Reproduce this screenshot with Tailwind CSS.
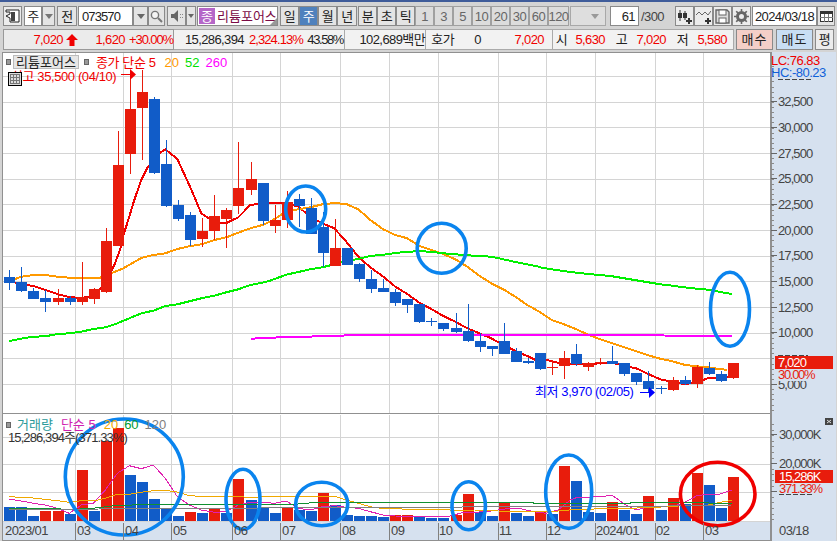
<!DOCTYPE html>
<html lang="ko">

<head>
    <meta charset="UTF-8">
    <title>073570 주봉 차트</title>
    <script src="https://cdn.jsdelivr.net/npm/@tailwindcss/browser@4"></script>
</head>

<body class="w-[837px] h-[541px] overflow-hidden bg-[#d4d4d4] flex flex-col text-[13px] leading-none text-[#222] font-['Liberation_Sans','Noto_Sans_CJK_KR',sans-serif]">
    <div class="h-[2px] shrink-0 bg-[#3f5c9a]"></div>

    <!-- toolbar -->
    <div class="flex h-[20px] mt-[4px] ml-[3px] shrink-0 tracking-[-0.6px]">
        <div class="w-[19px] border border-[#8a8a8a] bg-[#ececec] flex items-center justify-center">
            <svg width="15" height="14" viewBox="0 0 15 14"><path d="M1 1h13v12H5V9L1 7l4-2V3H1z" fill="#fff" stroke="#222"/><rect x="6" y="3" width="4" height="9" fill="#444"/></svg>
        </div>
        <div class="w-[18px] ml-[2px] border border-[#8a8a8a] bg-white flex items-center justify-center">주</div>
        <div class="w-[13px] border border-[#8a8a8a] bg-[#e4e4e4] flex items-center justify-center"><div class="border-x-[4px] border-t-[5px] border-x-transparent border-t-[#777]"></div></div>
        <div class="w-[20px] ml-[2px] border border-[#8a8a8a] bg-[#e4e4e4] flex items-center justify-center">전</div>
        <div class="w-[55px] ml-[1px] border border-[#8a8a8a] bg-white flex items-center pl-[3px] tracking-[-0.9px]">073570</div>
        <div class="w-[15px] border border-[#8a8a8a] bg-[#e4e4e4] flex items-center justify-center"><div class="border-x-[4px] border-t-[5px] border-x-transparent border-t-[#666]"></div></div>
        <div class="w-[17px] border border-[#8a8a8a] bg-[#e4e4e4] flex items-center justify-center">
            <svg width="13" height="13" viewBox="0 0 13 13"><circle cx="5" cy="5" r="3.6" fill="#f4f4f4" stroke="#777" stroke-width="1.4"/><path d="M8 8l4 4" stroke="#777" stroke-width="2"/></svg>
        </div>
        <div class="w-[19px] ml-[2px] border border-[#8a8a8a] bg-[#e4e4e4] flex items-center justify-center">
            <svg width="14" height="14" viewBox="0 0 14 14"><path d="M1 5h3l4-4v12l-4-4H1z" fill="#666"/><path d="M10 5h1v1h-1zM12 5h1v1h-1zM10 8h1v1h-1zM12 8h1v1h-1z" fill="#888"/></svg>
        </div>
        <div class="w-[10px] border border-[#8a8a8a] bg-[#e4e4e4] flex items-center justify-center"><div class="border-x-[3px] border-t-[4px] border-x-transparent border-t-[#666]"></div></div>
        <div class="w-[81px] ml-[1px] border border-[#8a8a8a] bg-white flex items-center relative tracking-normal">
            <div class="w-[16px] h-[16px] ml-[1px] bg-[#b566c8] text-white flex items-center justify-center">종</div>
            <div class="ml-[2px] text-[#7a0a45]">리튬포어스</div>
            <div class="absolute right-0 bottom-0 border-l-[7px] border-b-[7px] border-l-transparent border-b-[#999]"></div>
        </div>
        <div class="w-[19px] ml-[2px] border border-[#8a8a8a] bg-[#e4e4e4] flex items-center justify-center">일</div>
        <div class="w-[19px] border border-[#8a8a8a] bg-[#4f81bd] text-white flex items-center justify-center">주</div>
        <div class="w-[19px] border border-[#8a8a8a] bg-[#e4e4e4] flex items-center justify-center">월</div>
        <div class="w-[20px] border border-[#8a8a8a] bg-[#e4e4e4] flex items-center justify-center">년</div>
        <div class="w-[19px] ml-[1px] border border-[#8a8a8a] bg-[#e4e4e4] flex items-center justify-center">분</div>
        <div class="w-[19px] border border-[#8a8a8a] bg-[#e4e4e4] flex items-center justify-center">초</div>
        <div class="w-[19px] border border-[#8a8a8a] bg-[#e4e4e4] flex items-center justify-center">틱</div>
        <div class="w-[19px] border border-[#a0a0a0] bg-[#dcdcdc] text-[#666] flex items-center justify-center">1</div>
        <div class="w-[19px] border border-[#a0a0a0] bg-[#dcdcdc] text-[#666] flex items-center justify-center">3</div>
        <div class="w-[19px] border border-[#a0a0a0] bg-[#dcdcdc] text-[#666] flex items-center justify-center">5</div>
        <div class="w-[19px] border border-[#a0a0a0] bg-[#dcdcdc] text-[#666] flex items-center justify-center">10</div>
        <div class="w-[19px] border border-[#a0a0a0] bg-[#dcdcdc] text-[#666] flex items-center justify-center">20</div>
        <div class="w-[19px] border border-[#a0a0a0] bg-[#dcdcdc] text-[#666] flex items-center justify-center">30</div>
        <div class="w-[19px] border border-[#a0a0a0] bg-[#dcdcdc] text-[#666] flex items-center justify-center">60</div>
        <div class="w-[21px] border border-[#a0a0a0] bg-[#dcdcdc] text-[#666] flex items-center justify-center">120</div>
        <div class="w-[36px] ml-[1px] border border-[#a8a8a8] bg-[#dedede] flex items-center justify-end pr-[6px]"><div class="border-x-[4px] border-t-[5px] border-x-transparent border-t-[#999]"></div></div>
        <div class="w-[29px] ml-[4px] border border-[#8a8a8a] bg-white flex items-center justify-end pr-[3px]">61</div>
        <div class="w-[36px] pl-[2px] flex items-center text-[#444]">/300</div>
        <div class="w-[19px] border border-[#8a8a8a] bg-[#ececec] flex items-center justify-center">
            <svg width="15" height="15" viewBox="0 0 15 15"><path d="M3 1v11M8 2v9" stroke="#333"/><rect x="1" y="4" width="4" height="5" fill="#333"/><rect x="6" y="4" width="4" height="5" fill="#333"/><path d="M11 9h2v2h2v2h-2v2h-2v-2H9v-2h2z" fill="#333"/></svg>
        </div>
        <div class="w-[19px] border border-[#8a8a8a] bg-[#ececec] flex items-center justify-center">
            <svg width="15" height="15" viewBox="0 0 15 15"><path d="M0 6l3-3 3 3 3-3 3 3 3-4" fill="none" stroke="#666"/><path d="M11 9h2v2h2v2h-2v2h-2v-2H9v-2h2z" fill="#333"/></svg>
        </div>
        <div class="w-[19px] border border-[#8a8a8a] bg-[#ececec] flex items-center justify-center">
            <svg width="15" height="15" viewBox="0 0 15 15"><path d="M1 1h11l2 2v11H1z" fill="#ddd" stroke="#666" stroke-width="1.4"/><rect x="4" y="1" width="7" height="5" fill="#fff" stroke="#666"/><rect x="4" y="9" width="7" height="5" fill="#fff" stroke="#666"/></svg>
        </div>
        <div class="w-[19px] border border-[#8a8a8a] bg-[#ececec] flex items-center justify-center">
            <svg width="15" height="15" viewBox="0 0 15 15"><circle cx="7.5" cy="7.5" r="4" fill="none" stroke="#666" stroke-width="3"/><path d="M7.5 0v15M0 7.5h15M2.2 2.2l10.6 10.6M12.8 2.2L2.2 12.8" stroke="#666" stroke-width="1.6" stroke-dasharray="2.4 10 2.4 0"/></svg>
        </div>
        <div class="w-[65px] ml-[1px] border border-[#8a8a8a] bg-white flex items-center justify-center">2024/03/18</div>
        <div class="w-[18px] border border-[#8a8a8a] bg-[#e4e4e4] flex items-center justify-center">
            <svg width="13" height="11" viewBox="0 0 13 11"><rect x=".5" y=".5" width="12" height="10" fill="#fff" stroke="#333"/><path d="M0 1h13v2H0z" fill="#333"/><path d="M4.5 3v8M8.5 3v8M0 6.5h13" stroke="#777"/></svg>
        </div>
    </div>

    <!-- quote strip -->
    <div class="flex h-[21px] mt-[3px] ml-[3px] shrink-0 tracking-[-0.6px]">
        <div class="w-[171px] border border-[#999] bg-[#ebebeb] flex items-center text-[#f00000]">
            <div class="w-[59px] text-right">7,020</div>
            <svg class="ml-[3px]" width="12" height="12" viewBox="0 0 12 12"><path d="M6 0l6 6H8.500v6h-5V6H0z" fill="#f00000"/></svg>
            <div class="w-[47px] text-right">1,620</div>
            <div class="w-[48px] text-right tracking-[-1.1px]">+30.00%</div>
        </div>
        <div class="w-[171px] border border-[#aaa] border-l-0 bg-[#f2f2f2] flex items-center">
            <div class="w-[70px] text-right">15,286,394</div>
            <div class="w-[59px] text-right text-[#f00000] tracking-[-0.9px]">2,324.13%</div>
            <div class="w-[40px] text-right tracking-[-1.4px]">43.58%</div>
        </div>
        <div class="w-[81px] border border-[#aaa] border-l-0 bg-[#f2f2f2] flex items-center justify-end">102,689백만</div>
        <div class="w-[127px] border border-[#aaa] border-l-0 bg-[#f2f2f2] flex items-center">
            <div class="w-[28px] text-right">호가</div>
            <div class="w-[27px] text-right">0</div>
            <div class="w-[63px] text-right text-[#f00000]">7,020</div>
        </div>
        <div class="w-[181px] border border-[#aaa] border-l-0 bg-[#f2f2f2] flex items-center">
            <div class="w-[14px] text-right">시</div>
            <div class="w-[38px] text-right text-[#f00000]">5,630</div>
            <div class="w-[22px] text-right">고</div>
            <div class="w-[39px] text-right text-[#f00000]">7,020</div>
            <div class="w-[22px] text-right">저</div>
            <div class="w-[39px] text-right text-[#f00000]">5,580</div>
        </div>
        <div class="w-[37px] ml-[2px] border border-[#8a8a8a] bg-[#f4cfc8] flex items-center justify-center tracking-[1px]">매수</div>
        <div class="w-[37px] ml-[3px] border border-[#8a8a8a] bg-[#c8def4] flex items-center justify-center tracking-[1px]">매도</div>
        <div class="w-[19px] ml-[2px] border border-[#8a8a8a] bg-[#ececec] flex items-center justify-center">평</div>
    </div>

    <!-- chart -->
    <div class="relative mt-[2px] flex-1 flex min-h-0 pl-[2px] pr-[1px]">
        <div class="w-[768px] flex flex-col border-l border-[#909090]">
            <div class="h-[361px] bg-white border-t border-[#909090]"></div>
            <div class="h-[108px] bg-white border-t border-[#909090]"></div>
            <div class="flex-1 bg-[#d6e1ef] border-y border-[#909090]"></div>
        </div>
        <div class="flex-1 bg-[#d6e1ef] border-l-2 border-[#909090]"></div>

        <svg id="plot" class="absolute inset-0" width="837" height="489" viewBox="0 52 837 489" font-family="Liberation Sans, Noto Sans CJK KR, sans-serif" font-size="13"></svg>

        <!-- legends sit on top of the plot -->
        <div class="absolute left-[6px] top-[3px] flex items-center">
            <div class="w-[5px] h-[6px] bg-[#999] border border-[#666]"></div>
            <div class="w-[66px] h-[14px] ml-[2px] bg-[#e6e6e6] border border-[#bbb] flex items-center justify-center">리튬포어스</div>
            <div class="w-[5px] h-[6px] ml-[5px] bg-[#999] border border-[#666]"></div>
            <div class="ml-[7px] text-[#f00000] tracking-[-0.4px]">종가 단순 5</div>
            <div class="ml-[9px] text-[#ff9900]">20</div>
            <div class="ml-[6px] text-[#00e000]">52</div>
            <div class="ml-[6px] text-[#ff00ff]">260</div>
        </div>
        <div class="absolute left-[11px] top-[18px] text-[#f00000] tracking-[-0.4px]">최고 35,500 (04/10)</div>
        <div class="absolute left-[8px] top-[20px] w-[14px] h-[14px] bg-[#ddd] border border-black flex items-center justify-center">
            <svg width="10" height="10" viewBox="0 0 10 10"><path d="M0 .5h10M0 3.500h10M0 6.500h10M0 9.500h10M.5 0v10M3.500 0v10M6.500 0v10M9.500 0v10" stroke="#777"/></svg>
        </div>
        <div class="absolute left-[535px] top-[333px] text-[#0000ff] tracking-[-0.4px]">최저 3,970 (02/05)</div>
        <div class="absolute left-[6px] top-[366px] flex items-center">
            <div class="w-[5px] h-[6px] bg-[#999] border border-[#666]"></div>
            <div class="ml-[6px] text-[#2a9a9a]">거래량</div>
            <div class="ml-[8px] text-[#d020b0]">단순 5</div>
            <div class="ml-[8px] text-[#f0a800]">20</div>
            <div class="ml-[6px] text-[#009933]">60</div>
            <div class="ml-[6px] text-[#808080]">120</div>
        </div>
        <div class="absolute left-[8px] top-[379px] text-[#333] tracking-[-0.9px]">15,286,394주(371.33%)</div>
    </div>

    <script>
        // pixel values were read off 3x crops, so each chunk carries its crop origin
        const rows = [
            [0, 60, [[651,668,630,690,0],[666,693,621,695,0],[693,717,685,717,0],[714,726,690,755,0],[714,726,687,735,1],[714,726,708,735,0],[711,726,605,735,1],[687,717,685,732,1],[543,696,504,699,1],[315,558,213,558,1],[147,282,57,342,1],[96,144,30,300,1],[117,339,111,342,0],[312,438,240,441,0],[435,477,420,483,0],[465,540,456,558,0],[513,537,474,561,1],[468,513,405,540,1],[450,477,444,564,1],[384,438,246,462,1],[357,390,306,405,1],[369,483,369,495,0]]],
            [22, 170, [[150,167,105,189,1],[97,150,63,174,1],[87,108,72,171,0],[114,192,84,192,0],[171,249,126,291,0],[234,288,147,288,1],[234,285,234,285,0],[282,327,279,336,0],[327,357,300,369,0],[354,366,327,366,0],[366,399,357,408,0],[387,405,387,429,0],[402,456,402,459,0],[453,456,444,468,0],[459,477,459,483,0],[474,486,429,489,0],[483,513,402,516,0],[513,531,489,546,0],[528,537,528,558,0],[513,552,459,552,0],[543,576,534,576,0],[573,579,564,582,0],[549,597,549,600,0]]],
            [45, 260, [[321,324,300,345,1],[294,318,273,357,1],[282,312,252,318,0],[309,321,306,333,1],[306,309,295,315,1],[303,312,258,312,0],[309,342,309,348,0],[339,366,339,375,0],[363,387,333,399,0],[384,387,378,402,0],[360,390,351,393,1],[360,372,348,375,0],[321,372,315,384,1],[324,342,306,345,0],[342,363,333,366,0],[309,354,309,357,1]]]
        ];
        const RED = '#e81c0c', BLUE = '#115cc8', AXIS = '#d6e1ef';
        const cx = i => 9.3 + 12.06 * i;
        let s = '';

        // grid
        for (const x of [75,123,171,232,280,340,389,438,498,546,595,655,703]) {
            s += `<path d="M${x}.5 53V413M${x}.5 415V521" stroke="#d4d4d4" shape-rendering="crispEdges"/>`;
        }
        for (let i = 0; i < 13; i++) {
            const y = Math.round(76 + i * 25.67);
            s += `<path d="M3 ${y}.5H770" stroke="#d4d4d4" shape-rendering="crispEdges"/>`;
        }
        for (const y of [437, 464, 492, 521]) s += `<path d="M3 ${y}.5H770" stroke="#d4d4d4" shape-rendering="crispEdges"/>`;

        const line = (segs, color, w) => {
            const pts = segs.flatMap(([ox, oy, list]) => list.map(p => `${(ox + p[0] / 3).toFixed(1)},${(oy + p[1] / 3).toFixed(1)}`));
            return `<polyline points="${pts.join(' ')}" fill="none" stroke="${color}" stroke-width="${w}" stroke-linejoin="round" shape-rendering="crispEdges"/>`;
        };

        // price moving averages, candles go over them
        s += line([[0, 60, [[46,669],[64,672],[100,678],[136,690],[172,702],[208,711],[244,714],[280,708],[316,672],[345,610],[360,570],[372,520],[388,470],[403,420],[424,360],[444,320],[478,280],[496,268],[532,297],[568,375],[604,460],[625,474],[660,489],[679,489],[715,472],[751,435],[787,430]]],
            [270, 170, [[49,99],[85,110],[121,140],[157,160],[193,175],[229,215],[265,260],[301,292],[340,320],[376,350],[412,372],[448,398],[484,417],[520,438],[556,455],[592,475],[628,490],[664,505],[700,525],[736,543],[772,558],[808,575]]],
            [540, 260, [[0,293],[35,304],[70,312],[109,312],[145,314],[181,309],[217,308],[253,318],[289,325],[325,342],[361,358],[397,366],[433,372],[469,368],[505,354],[541,352],[577,352]]]], '#f00000', 2);
        s += line([[0, 60, [[46,657],[64,650],[100,645],[136,645],[172,650],[208,653],[244,654],[298,654],[334,640],[370,625],[424,594],[460,585],[496,580],[532,567],[568,559],[604,553],[643,540],[679,532],[715,518],[751,505],[787,495]]],
            [270, 170, [[0,155],[49,125],[85,118],[121,112],[157,103],[193,99],[229,102],[265,118],[301,150],[340,178],[376,195],[412,205],[448,228],[484,240],[520,252],[556,268],[592,290],[628,317],[664,340],[700,358],[736,380],[772,405],[808,425]]],
            [540, 260, [[0,157],[35,180],[70,192],[109,208],[145,224],[181,238],[217,250],[253,262],[289,274],[325,286],[361,296],[397,304],[433,314],[469,319],[505,322],[541,328],[562,329]]]], '#ff9900', 2);
        s += line([[0, 60, [[28,843],[64,836],[100,830],[136,829],[172,822],[208,820],[244,815],[280,807],[316,802],[352,790],[388,775],[424,760],[460,752],[496,738],[532,733],[568,724],[604,715],[643,707],[679,697],[715,688],[751,675],[787,668]]],
            [270, 170, [[0,332],[49,314],[85,306],[121,298],[157,292],[193,283],[229,272],[265,267],[301,258],[340,254],[376,249],[412,245],[448,244],[484,245],[520,250],[556,253],[592,256],[628,258],[664,260],[700,268],[736,276],[772,283],[808,290]]],
            [540, 260, [[0,22],[35,28],[70,33],[109,38],[145,42],[181,45],[217,49],[253,55],[289,61],[325,67],[361,73],[397,77],[433,82],[469,86],[505,89],[541,96],[577,102]]]], '#00f000', 2);
        s += line([[0, 60, [[752,836],[840,832]]], [270, 170, [[85,501],[195,497],[340,494]]], [540, 260, [[0,224],[289,226],[577,228]]]], '#ff00ff', 2);

        // candles
        for (const [start, oy, list] of rows) {
            list.forEach((c, k) => {
                const i = start + k, x = Math.round(cx(i)), col = c[4] ? RED : BLUE;
                const y = v => Math.round(oy + v / 3);
                s += `<g shape-rendering="crispEdges" fill="${col}"><rect x="${x}" y="${y(c[2])}" width="1" height="${y(c[3]) - y(c[2])}"/><rect x="${x - 5}" y="${y(c[0])}" width="11" height="${Math.max(1, y(c[1]) - y(c[0]))}"/></g>`;
            });
        }

        // volume bars
        const vol = [[291,0],[291,0],[318,0],[302,1],[302,1],[312,0],[180,1],[302,0],[92,1],[54,1],[195,0],[216,0],[267,0],[295,0],[318,0],[306,1],[309,0],[297,1],[309,0],[207,1],[270,0],[294,0],[309,0],[292,1],[300,0],[302,0],[249,1],[285,0],[315,0],[318,0],[318,0],[321,0],[316,1],[316,1],[321,0],[324,0],[324,0],[316,1],[252,1],[306,0],[318,0],[279,1],[309,0],[318,0],[303,1],[312,0],[168,1],[213,0],[306,0],[309,0],[276,1],[300,0],[312,0],[258,1],[300,0],[264,1],[282,0],[189,1],[225,0],[294,0],[201,1]];
        vol.forEach(([top, up], i) => {
            const y = Math.round(410 + top / 3);
            s += `<rect x="${Math.round(cx(i)) - 5}" y="${y}" width="11" height="${521 - y}" fill="${up ? RED : BLUE}" shape-rendering="crispEdges"/>`;
        });
        s += line([[0, 410, [[28,267],[64,273],[100,280],[136,285],[172,295],[208,310],[244,285],[280,280],[316,240],[352,190],[388,167],[424,176],[460,165],[496,205],[532,260],[568,285],[604,300],[643,307],[679,305],[715,285],[751,277],[787,277],[823,280],[859,273],[895,295],[931,300],[967,290],[1003,287],[1039,292],[1075,295],[1111,305],[1150,315],[1186,318],[1258,320]]],
            [417, 410, [[100,318],[136,308],[208,305],[280,295],[314,297],[350,305],[387,310],[423,300],[460,270],[478,263],[550,260],[586,256],[622,282],[658,300],[694,290],[766,290],[802,278],[838,258],[874,252],[910,252],[946,240]]]], '#e020b0', 1);
        s += line([[0, 410, [[28,260],[100,264],[172,272],[208,277],[244,272],[280,273],[316,265],[352,253],[388,253],[424,247],[460,242],[496,241],[532,246],[568,257],[604,259],[715,260],[751,262],[859,258],[1003,258],[1039,270],[1111,290],[1150,296],[1258,298]]],
            [417, 410, [[100,300],[172,300],[244,303],[350,306],[423,303],[478,298],[586,296],[694,293],[838,285],[874,285],[910,277],[946,271]]]], '#f0a800', 1);
        s += line([[0, 410, [[28,296],[172,296],[208,299],[298,293],[352,286],[496,283],[715,283],[895,282],[951,277],[1260,277]]],
            [417, 410, [[350,277],[351,281],[640,281],[640,276],[946,280]]]], '#109030', 1);
        s += line([[0, 410, [[28,300],[298,297],[1260,291]]], [417, 410, [[100,292],[172,290],[460,288],[694,289],[946,285]]]], '#808080', 1);

        // hand drawn markings
        const ell = (x, y, rx, ry, c) => `<ellipse cx="${x}" cy="${y}" rx="${rx}" ry="${ry}" fill="none" stroke="${c}" stroke-width="3.600"/>`;
        const MARK = '#0a84ee';
        s += ell(305.7,209,20,23,MARK) + ell(441.7,248.3,24.5,25,MARK) + ell(730,309.3,19.5,37,MARK);
        s += ell(124.3,477,59,58,MARK) + ell(243,499.3,17,30,MARK) + ell(321.7,504,26,21.7,MARK);
        s += ell(468.7,505.7,16.7,24,MARK) + ell(568.7,491.7,23,36.7,MARK) + ell(717.7,494,37.3,31.7,'#f00000');

        // high / low arrows
        s += `<path d="M121 74.500H131" stroke="#f00000"/><path d="M130 69l6 5.500-6 5.500z" fill="#f00000"/>`;
        s += `<path d="M640 392.500H650" stroke="#0000ff"/><path d="M649 387l6 5.500-6 5.500z" fill="#0000ff"/>`;

        // right axis ticks and labels
        const label = (x, y, text, fill, ls = -0.9) => `<text x="${x}" y="${y}" fill="${fill}" letter-spacing="${ls}">${text}</text>`;
        for (let y = 66; y < 412; y += 5.13) s += `<path d="M771 ${Math.round(y)}.5h3" stroke="#8a8a8a" shape-rendering="crispEdges"/>`;
        for (let y = 424; y < 521; y += 5.6) s += `<path d="M771 ${Math.round(y)}.5h3" stroke="#8a8a8a" shape-rendering="crispEdges"/>`;
        ['32,500','30,000','27,500','25,000','22,500','20,000','17,500','15,000','12,500','10,000'].forEach((t, i) => {
            const y = Math.round(101.3 + i * 25.67);
            s += `<path d="M771 ${y}.5h6" stroke="#666" shape-rendering="crispEdges"/>` + label(778, y + 5, t, '#444');
        });
        s += `<path d="M771 384.500h6" stroke="#666" shape-rendering="crispEdges"/>` + label(778, 389, '5,000', '#444');
        s += `<path d="M778 79.500h34" stroke="#444" stroke-dasharray="5 2" shape-rendering="crispEdges"/>`;
        s += label(771, 65, 'LC:76.83', '#f00000', -0.5) + label(771, 77, 'HC:-80.23', '#1060d8', -0.5);
        // the price tag and its percent line cover whatever axis label sits under them
        s += `<rect x="775" y="369" width="58" height="12" fill="${AXIS}"/><rect x="775" y="356" width="58" height="13" fill="${RED}"/>`;
        s += `<path d="M778 355.500h30" stroke="#444" stroke-dasharray="5 2" shape-rendering="crispEdges"/>`;
        s += label(778, 367, '7,020', '#fff') + label(778, 379, '30.00%', RED, -1.3);
        [['30,000K', 434], ['20,000K', 463]].forEach(([t, y]) => {
            s += `<path d="M771 ${y}.5h6" stroke="#666" shape-rendering="crispEdges"/>` + label(779, y + 5, t, '#444', -1);
        });
        s += `<path d="M771 491.500h6" stroke="#666" shape-rendering="crispEdges"/><path d="M779 494.500h34" stroke="#444" stroke-dasharray="5 2" shape-rendering="crispEdges"/>`;
        s += `<rect x="775" y="470" width="58" height="13" fill="${RED}"/>` + label(779, 481, '15,286K', '#fff', -1) + label(779, 493, '371.33%', RED, -1.2);
        s += `<rect x="825" y="418" width="8" height="7" fill="#444"/><path d="M827 420l4 3M831 420l-4 3" stroke="#ddd"/>`;

        // date axis
        [['2023/01',5,0],['03',77,75],['04',125,123],['05',173,171],['06',234,232],['07',282,280],['08',342,340],['09',391,389],['10',439,438],['11',499,498],['12',547,546],['2024/01',596,595],['02',656,655],['03',705,703],['03/18',779,0]].forEach(([t, x, tick]) => {
            if (tick) s += `<path d="M${tick}.5 523v17" stroke="#808080" shape-rendering="crispEdges"/>`;
            s += label(x, 535, t, '#444', -0.6);
        });

        document.getElementById('plot').innerHTML = s;
    </script>
</body>

</html>
